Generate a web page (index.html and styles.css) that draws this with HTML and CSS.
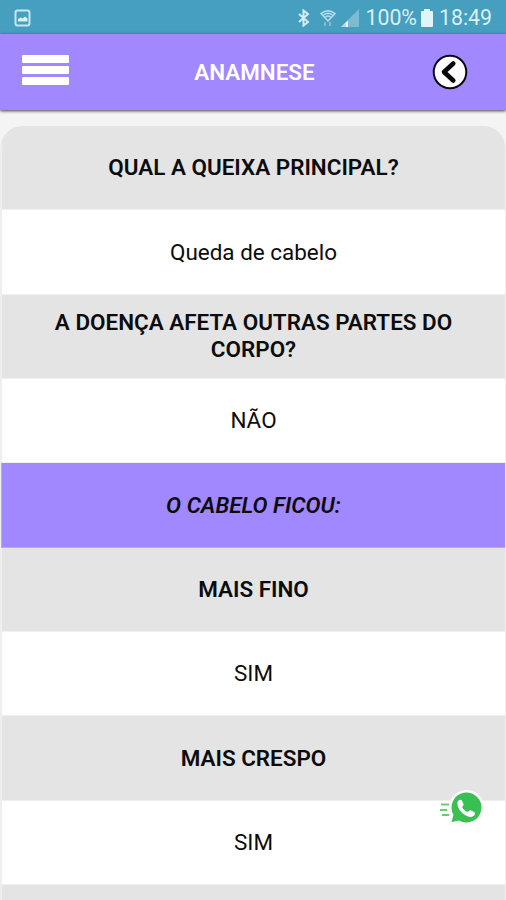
FILE: index.html
```html
<!DOCTYPE html>
<html lang="pt-BR">
<head>
<meta charset="utf-8">
<meta name="viewport" content="width=device-width, initial-scale=1">
<title>Anamnese</title>
<link rel="stylesheet" href="styles.css">
</head>
<body>
<div class="status">
  <svg class="photo" width="18" height="18" viewBox="0 0 18 18"><rect x="1.500" y="1.500" width="14" height="15" rx="2" fill="none" stroke="#c5e7f2" stroke-width="2"/><path d="M4 12.500V10l2.500-1.500 2 1 2.500-2 2.500 2v3z" fill="#d8f2f9"/></svg>
  <div class="indicators">
    <svg class="bluetooth" width="12" height="18" viewBox="0 0 12 18"><path d="M1 5l9 8-4.500 3.500V1.500L10 5l-9 8" fill="none" stroke="#d3edf5" stroke-width="2"/></svg>
    <svg class="wifi" width="16" height="18" viewBox="0 0 16 18"><g fill="none" stroke="#b9dfea" stroke-width="1.500"><path d="M1 4.500Q8-1 15 4.500L8 12z"/><path d="M3.500 6Q8 2.500 12.500 6M5.500 8Q8 6 10.500 8"/></g><path d="M4 13h2v4H4zM9 13h2v4H9z" fill="#80bdd0"/></svg>
    <svg class="signal" width="18" height="18" viewBox="0 0 18 18"><path d="M0 18L18 0v18z" fill="#7dbbd0"/><path d="M0 18l7-7v7z" fill="#b5dce8"/><path d="M5 13h2v5H5z" fill="#eefaff"/></svg>
    <span class="percent">100%</span>
    <svg class="battery" width="12" height="18" viewBox="0 0 12 18"><path d="M3 0h6v2h2q1 0 1 1v14q0 1-1 1H1q-1 0-1-1V3q0-1 1-1h2z" fill="#def5fa"/></svg>
    <span class="clock">18:49</span>
  </div>
</div>
<header class="bar">
  <div class="menu"><i></i><i></i><i></i></div>
  <h1>ANAMNESE</h1>
  <svg class="back" width="36" height="36" viewBox="0 0 36 36"><circle cx="18" cy="18" r="16.300" fill="#fff" stroke="#0b0812" stroke-width="2"/><path d="M21.300 9.500L12 18l9.300 8.500" fill="none" stroke="#080808" stroke-width="4.600" stroke-linecap="round" stroke-linejoin="round"/></svg>
</header>
<main class="sheet">
  <div class="row question">QUAL A QUEIXA PRINCIPAL?</div>
  <div class="row">Queda de cabelo</div>
  <div class="row question">A DOENÇA AFETA OUTRAS PARTES DO CORPO?</div>
  <div class="row">NÃO</div>
  <div class="row section">O CABELO FICOU:</div>
  <div class="row question">MAIS FINO</div>
  <div class="row">SIM</div>
  <div class="row question">MAIS CRESPO</div>
  <div class="row">SIM</div>
  <div class="row question next"></div>
</main>
<svg class="whatsapp" width="48" height="40" viewBox="0 0 48 40"><path d="M9 37l2.300-9A18 18 0 1 1 19 36z" fill="#fafafa"/><path d="M12.500 34l2-7A15 15 0 1 1 20 32.500z" fill="#38c152"/><path d="M18.800 13.500c1-2 3.600-2.500 4.300-.8l1.400 3.500c.4 1-.9 2-1.500 2.900 1.300 2.500 3 4 5.700 5 1-.9 1.900-2.300 3-1.800l3.700 2c1.700 1-.4 4.800-3.700 4.700-6.500-.3-15.200-9-12.900-15.500z" fill="#fff"/><path d="M2 16.500h8M1 22h7M3 27h7" stroke="#64cf79" stroke-width="2"/></svg>
</body>
</html>
```
FILE: styles.css
```css
* { box-sizing: border-box; }
body {
  margin: 0;
  height: 900px;
  overflow: hidden;
  position: relative;
  background: #f4f4f4;
  color: #0c0c0c;
  font-family: Roboto, "Liberation Sans", sans-serif;
}
.status {
  height: 34px;
  padding: 1px 14px 0;
  display: flex;
  align-items: center;
  justify-content: space-between;
  background: #469fbe;
  color: #d9f0f6;
}
.status svg { display: block; flex: none; }
.indicators { display: flex; align-items: center; white-space: nowrap; }
.bluetooth { margin-right: -1px; }
.wifi { margin-left: 11px; }
.signal { margin-left: 5px; }
.percent { margin-left: 6px; font-size: 21.3px; }
.battery { margin-left: 4px; }
.clock { margin-left: 6px; font-size: 21.3px; }
.bar {
  height: 76px;
  padding: 0 38px 0 22px;
  display: grid;
  grid-template-columns: 47px 1fr 36px;
  align-items: center;
  background: #a288ff;
  box-shadow: 0 1px 3px rgba(0, 0, 0, .75);
}
.menu { display: grid; gap: 3px; margin-top: -5px; }
.menu i { height: 8px; background: #fff; border-radius: 1px; }
.bar h1 {
  margin: 0;
  padding-left: 8px;
  text-align: center;
  color: #fff;
  font-size: 22.4px;
  font-weight: 600;
}
.sheet {
  height: 774px;
  margin-top: 16px;
  border-radius: 22px 22px 0 0;
  overflow: hidden;
  border: solid #eee;
  border-width: 0 1px;
}
.row {
  height: 84.35px;
  padding: 0 40px;
  display: flex;
  align-items: center;
  justify-content: center;
  text-align: center;
  background: #fff;
  border: 1px solid #efefef;
  border-width: 0 0 1px 1px;
  font-size: 22.45px;
  line-height: 27px;
}
.question { background: #e4e4e4; font-weight: 600; }
.section { background: #a288ff; font-weight: 600; font-style: italic; border-color: #b9a7ff; }
.next { height: 14.85px; border-bottom: 0; }
.whatsapp { position: absolute; left: 439px; top: 788px; }
```
